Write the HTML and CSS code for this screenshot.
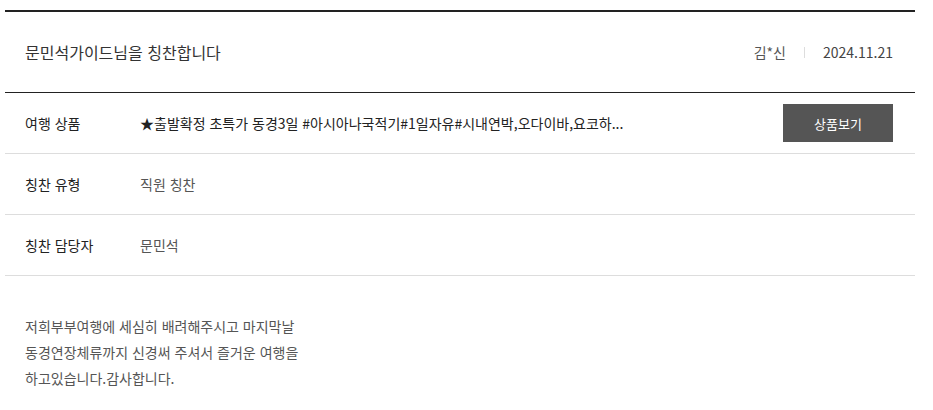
FILE: index.html
```html
<!DOCTYPE html>
<html lang="ko">
<head>
<meta charset="utf-8">
<link rel="stylesheet" href="styles.css">
</head>
<body>
<div class="board">
  <div class="head">
    <h2 class="title">문민석가이드님을 칭찬합니다</h2>
    <div class="meta">
      <span class="writer">김*신</span>
      <span class="sep"></span>
      <span class="date">2024.11.21</span>
    </div>
  </div>
  <div class="row">
    <div class="label">여행 상품</div>
    <div class="value product">★출발확정 초특가 동경3일 #아시아나국적기#1일자유#시내연박,오다이바,요코하...</div>
    <button class="btn">상품보기</button>
  </div>
  <div class="row">
    <div class="label">칭찬 유형</div>
    <div class="value">직원 칭찬</div>
  </div>
  <div class="row">
    <div class="label">칭찬 담당자</div>
    <div class="value">문민석</div>
  </div>
  <div class="content">
    <p>저희부부여행에 세심히 배려해주시고 마지막날<br>동경연장체류까지 신경써 주셔서 즐거운 여행을<br>하고있습니다.감사합니다.</p>
  </div>
</div>
</body>
</html>
```

FILE: styles.css
```css
* { box-sizing: border-box; }
body {
  margin: 0;
  font-family: "Noto Sans CJK KR", "Noto Sans", sans-serif;
  color: #222;
  background: #fff;
}
.board {
  width: 910px;
  margin: 10px 0 0 5px;
  border-top: 2px solid #222;
}
.head {
  height: 81px;
  display: flex;
  align-items: center;
  justify-content: space-between;
  padding: 0 22px 0 20px;
  border-bottom: 1px solid #222;
}
.title {
  margin: 0;
  font-size: 16px;
  font-weight: 400;
  color: #333;
}
.meta {
  display: flex;
  align-items: center;
  font-size: 14px;
  color: #555;
}
.sep {
  width: 1px;
  height: 11px;
  background: #ddd;
  margin: 0 18px;
}
.date {
  color: #444;
  font-size: 14px;
}
.row {
  height: 61px;
  display: flex;
  align-items: center;
  padding: 0 22px 0 20px;
  border-bottom: 1px solid #ddd;
  font-size: 14px;
}
.label {
  width: 115px;
  color: #222;
}
.value {
  flex: 1;
  color: #555;
}
.value.product {
  color: #222;
}
.btn {
  width: 110px;
  height: 38px;
  border: 0;
  background: #555;
  color: #fff;
  font-family: inherit;
  font-size: 13px;
  padding: 0;
}
.content {
  padding: 37px 20px;
}
.content p {
  margin: 0;
  font-size: 14px;
  line-height: 26px;
  color: #555;
}
```
